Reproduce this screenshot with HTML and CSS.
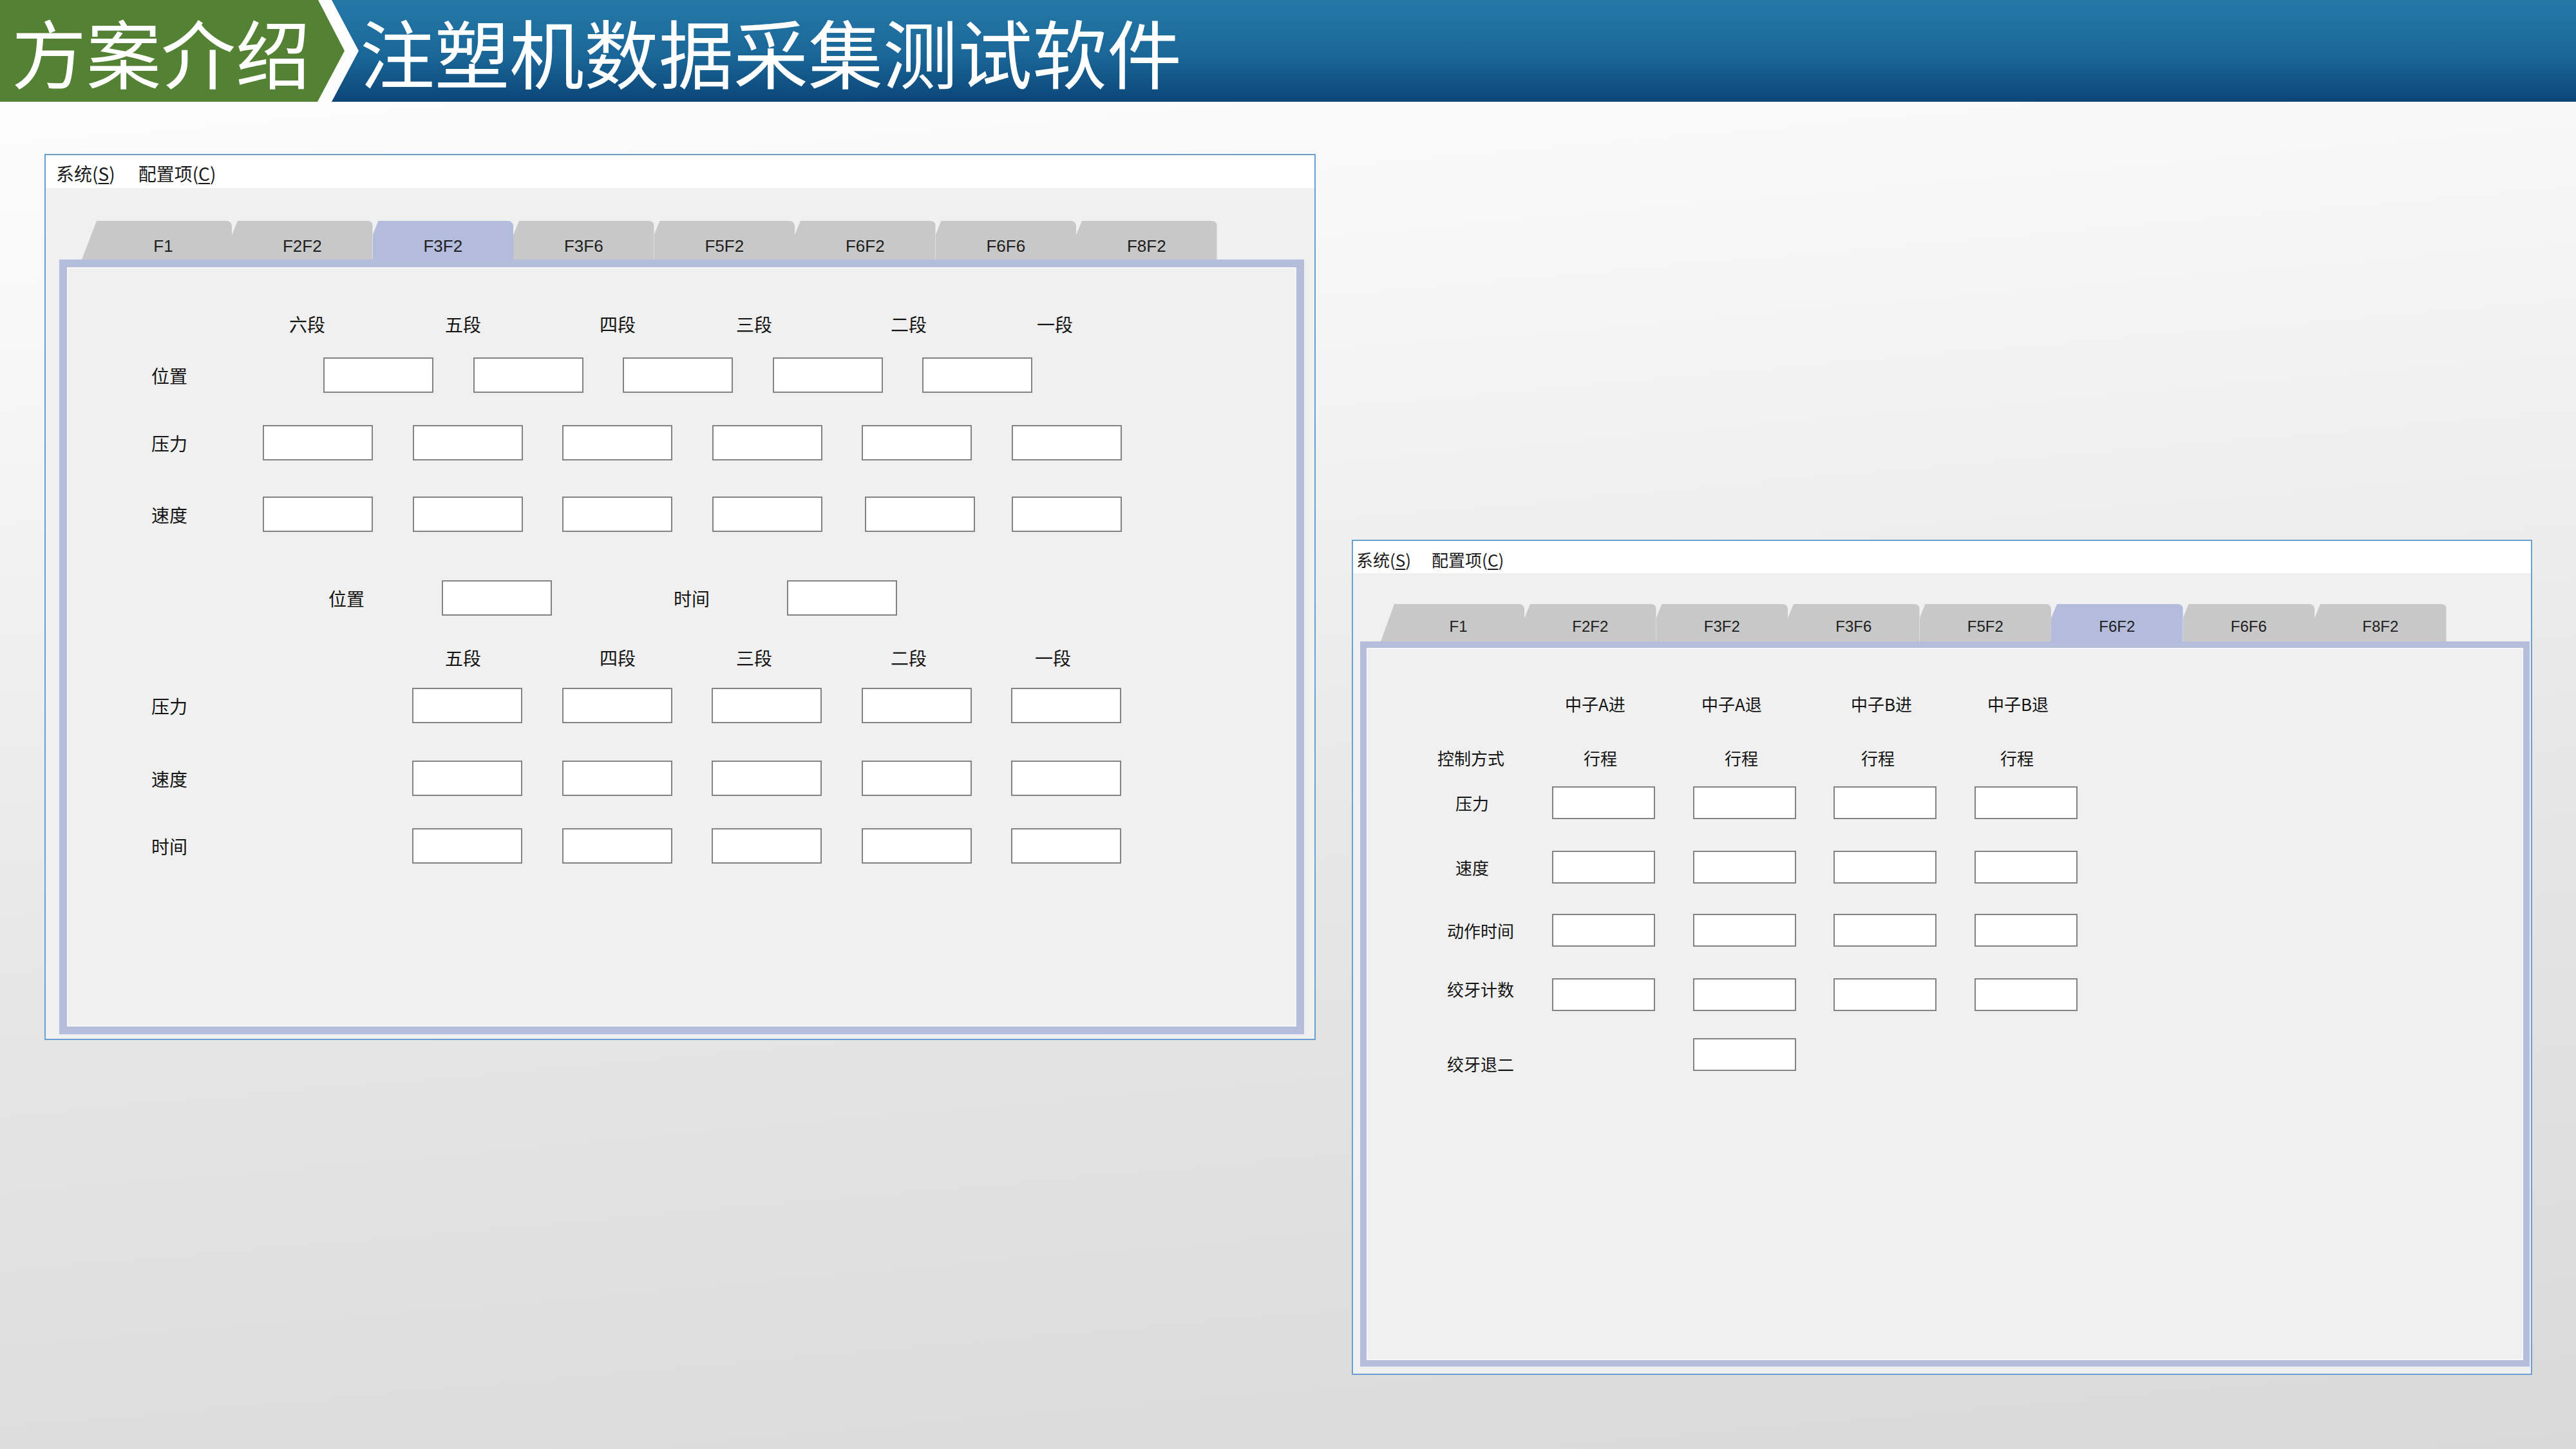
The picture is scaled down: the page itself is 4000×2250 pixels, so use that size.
FILE: index.html
```html
<!DOCTYPE html>
<html lang="zh-CN">
<head>
<meta charset="utf-8">
<title>注塑机数据采集测试软件</title>
<link rel="stylesheet" href="styles.css">
</head>
<body>
<header class="banner">
  <div class="banner-green">方案介绍</div>
  <div class="banner-blue">注塑机数据采集测试软件</div>
</header>
<main class="desk">
  <section class="win win-left">
    <div class="menubar"><span>系统(<u>S</u>)</span><span>配置项(<u>C</u>)</span></div>
    <div class="winbody">
      <div class="tabs">
        <div class="tab first">F1</div>
        <div class="tab">F2F2</div>
        <div class="tab on">F3F2</div>
        <div class="tab">F3F6</div>
        <div class="tab">F5F2</div>
        <div class="tab">F6F2</div>
        <div class="tab">F6F6</div>
        <div class="tab">F8F2</div>
      </div>
      <div class="panel">
        <div class="hdr hdr-1"><span>六段</span><span>五段</span><span>四段</span><span>三段</span><span>二段</span><span>一段</span></div>
        <div class="frow l-pos"><span class="lbl wide">位置</span><i class="box"></i><i class="box"></i><i class="box"></i><i class="box"></i><i class="box"></i></div>
        <div class="frow l-pre"><span class="lbl">压力</span><i class="box"></i><i class="box"></i><i class="box"></i><i class="box"></i><i class="box"></i><i class="box"></i></div>
        <div class="frow l-spd"><span class="lbl">速度</span><i class="box"></i><i class="box"></i><i class="box"></i><i class="box"></i><i class="box nudge"></i><i class="box pull"></i></div>
        <div class="frow l-pt"><span class="lbl lbl-pos2">位置</span><i class="box"></i><span class="lbl lbl-time">时间</span><i class="box"></i></div>
        <div class="hdr hdr-2"><span>五段</span><span>四段</span><span>三段</span><span>二段</span><span>一段</span></div>
        <div class="frow l-pre2"><span class="lbl lower">压力</span><i class="box"></i><i class="box"></i><i class="box"></i><i class="box"></i><i class="box"></i></div>
        <div class="frow l-spd2"><span class="lbl lower">速度</span><i class="box"></i><i class="box"></i><i class="box"></i><i class="box"></i><i class="box"></i></div>
        <div class="frow l-tim2"><span class="lbl lower">时间</span><i class="box"></i><i class="box"></i><i class="box"></i><i class="box"></i><i class="box"></i></div>
      </div>
    </div>
  </section>

  <section class="win win-right">
    <div class="menubar"><span>系统(<u>S</u>)</span><span>配置项(<u>C</u>)</span></div>
    <div class="winbody">
      <div class="tabs">
        <div class="tab first">F1</div>
        <div class="tab">F2F2</div>
        <div class="tab">F3F2</div>
        <div class="tab">F3F6</div>
        <div class="tab">F5F2</div>
        <div class="tab on">F6F2</div>
        <div class="tab">F6F6</div>
        <div class="tab">F8F2</div>
      </div>
      <div class="panel">
        <div class="hdr r-hdr"><span>中子A进</span><span>中子A退</span><span>中子B进</span><span>中子B退</span></div>
        <div class="frow r-ctl"><span class="lbl l0">控制方式</span><div class="hdr r-mode"><span>行程</span><span>行程</span><span>行程</span><span>行程</span></div></div>
        <div class="frow r-pre"><span class="lbl">压力</span><i class="box"></i><i class="box"></i><i class="box"></i><i class="box"></i></div>
        <div class="frow r-spd"><span class="lbl">速度</span><i class="box"></i><i class="box"></i><i class="box"></i><i class="box"></i></div>
        <div class="frow r-act"><span class="lbl l4">动作时间</span><i class="box"></i><i class="box"></i><i class="box"></i><i class="box"></i></div>
        <div class="frow r-cnt"><span class="lbl l4 up">绞牙计数</span><i class="box"></i><i class="box"></i><i class="box"></i><i class="box"></i></div>
        <div class="frow r-ret"><span class="lbl l4 down">绞牙退二</span><i class="box skip"></i></div>
      </div>
    </div>
  </section>
</main>
</body>
</html>
```

FILE: styles.css
```css
* { box-sizing: border-box; }
html, body { margin: 0; padding: 0; }
body {
  width: 4000px;
  height: 2250px;
  overflow: hidden;
  background: linear-gradient(175deg, #ffffff 0%, #f7f7f7 22%, #e6e6e6 60%, #d9d9d9 100%);
  font-family: "Noto Sans CJK SC", "Noto Sans", sans-serif;
  color: #141414;
}

/* ---------- banner ---------- */
.banner { display: flex; height: 158px; }
.banner-green {
  flex: none;
  width: 536px;
  background: #548235;
  clip-path: polygon(0 0, 494px 0, 535px 79px, 493px 158px, 0 158px);
  color: #fff;
  font-size: 116px;
  line-height: 156px;
  padding-left: 18px;
  white-space: nowrap;
}
.banner-blue {
  flex: 1;
  margin-left: -21px;
  background: linear-gradient(to bottom, #2479a9 0%, #1a6698 55%, #0c4577 100%);
  clip-path: polygon(0 0, 100% 0, 100% 100%, 0 100%, 42px 79px);
  color: #fff;
  font-size: 116px;
  line-height: 156px;
  padding-left: 44px;
  white-space: nowrap;
}

/* ---------- desktop ---------- */
.desk { display: flex; align-items: flex-start; padding: 81px 0 0 69px; }
.win {
  flex: none;
  display: flex;
  flex-direction: column;
  border: 2px solid #6a9fd3;
  background: #f0f0f0;
}
.win-left { width: 1974px; height: 1376px; }
.win-right { width: 1833px; height: 1297px; margin-left: 56px; margin-top: 599px; }

.menubar { flex: none; display: flex; align-items: center; background: #fff; line-height: 1; color: #1a1a1a; }
.menubar u { text-underline-offset: 3px; }
.win-left .menubar { height: 51px; padding: 4px 0 0 16px; gap: 36px; font-size: 28px; }
.win-right .menubar { height: 50px; padding: 7px 0 0 5px; gap: 32px; font-size: 26px; }

.winbody { flex: 1; }
.win-left .winbody { padding: 51px 0 0 21px; }
.win-right .winbody { padding: 48px 0 0 11px; }

/* ---------- tabs ---------- */
.tabs { display: flex; }
.win-left .tabs { margin-left: 35px; height: 60px; }
.win-right .tabs { margin-left: 32px; height: 58px; }
.tab {
  flex: none;
  display: flex;
  justify-content: center;
  align-items: center;
  background: #c8c8c8;
  border-top-right-radius: 8px;
  clip-path: polygon(0 22px, 9px 0, 100% 0, 100% 100%, 0 100%);
  font-family: "Liberation Sans", Arial, sans-serif;
  color: #1e1e1e;
  line-height: 1;
}
.tab.on { background: #b3bcdc; }
.win-left .tab { width: 218.5px; font-size: 26px; padding-top: 18px; }
.win-left .tab.first { width: 233px; padding-left: 20px; clip-path: polygon(0 100%, 23px 0, 100% 0, 100% 100%); }
.win-right .tab { width: 204.5px; font-size: 24px; padding-top: 12px; }
.win-right .tab.first { width: 223px; padding-left: 18px; clip-path: polygon(0 100%, 21px 0, 100% 0, 100% 100%); }

/* ---------- panel ---------- */
.panel {
  border-style: solid;
  border-color: #b5bddc;
  background: #f0f0f0;
  box-shadow: inset 0 0 0 2px #f7f7fb;
}
.win-left .panel { width: 1933px; height: 1203px; border-width: 12px; padding: 73px 0 0 131px; font-size: 28px; }
.win-right .panel { width: 1816px; height: 1126px; border-width: 10px; padding: 74px 0 0 110px; font-size: 26px; }

.hdr { display: grid; align-items: center; line-height: 1; white-space: nowrap; }
.frow { display: flex; align-items: center; }
.lbl { flex: none; line-height: 1; white-space: nowrap; }
.box { flex: none; display: block; background: #fff; border: 2px solid #838383; }

/* left window form */
.win-left .hdr { height: 30px; }
.hdr-1 { margin-left: 214px; grid-template-columns: 242px 240px 212px 240px 227px 56px; }
.hdr-2 { margin-left: 456px; grid-template-columns: 240px 212px 240px 224px 56px; }
.win-left .frow { height: 55px; }
.win-left .box { width: 171px; height: 55px; }
.win-left .box + .box { margin-left: 61.6px; }
.win-left .box.nudge { margin-left: 66.6px; }
.win-left .box.pull { margin-left: 56.6px; }
.win-left .lbl { width: 173px; }
.win-left .lbl.wide { width: 267px; }
.win-left .lbl.lower { width: 405px; }
.win-left .lbl-pos2 { margin-left: 275px; width: 176px; }
.win-left .lbl-time { margin-left: 189px; width: 176px; }

.l-pos { margin-top: 37px; }
.l-pre { margin-top: 50px; }
.l-spd { margin-top: 56px; }
.l-pt { margin-top: 75px; }
.hdr-2 { margin-top: 50px; }
.l-pre2 { margin-top: 32px; }
.l-spd2 { margin-top: 58px; }
.l-tim2 { margin-top: 50px; }

/* right window form */
.win-right .hdr { height: 30px; }
.r-hdr { margin-left: 198px; grid-template-columns: 212px 232px 212px auto; }
.r-ctl { height: 30px; margin-top: 54px; }
.r-mode { margin-left: 49px; grid-template-columns: 219px 212px 216px auto; }
.win-right .frow { height: 51px; }
.win-right .r-ctl { height: 30px; }
.win-right .box { width: 160px; height: 51px; }
.win-right .box + .box { margin-left: 58.5px; }
.win-right .box.skip { margin-left: 218.5px; }
.win-right .lbl { width: 178px; padding-left: 28px; }
.win-right .lbl.l4 { padding-left: 15px; }
.win-right .lbl.l0 { padding-left: 0; }
.win-right .lbl.up { margin-bottom: 18px; }
.win-right .lbl.down { margin-top: 28px; }

.r-hdr { margin-top: -2px; }
.r-pre { margin-top: 29px; }
.r-spd { margin-top: 49px; }
.r-act { margin-top: 47px; }
.r-cnt { margin-top: 49px; }
.r-ret { margin-top: 42px; }
```
